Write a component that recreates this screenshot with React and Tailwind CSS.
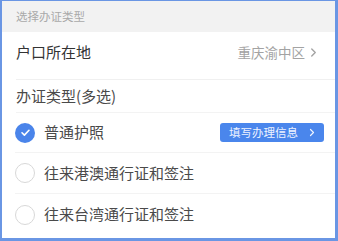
import React from "react";

const Chevron = ({ className }) => (
  <svg className={className} viewBox="0 0 8 12" fill="none" stroke="currentColor" strokeWidth="1.6" strokeLinecap="round" strokeLinejoin="round">
    <path d="M2 2l4 4-4 4" />
  </svg>
);

const Check = () => (
  <div className="w-[20px] h-[20px] rounded-full bg-[#4a84ea] flex items-center justify-center shrink-0">
    <svg width="11" height="11" viewBox="0 0 12 12" fill="none" stroke="white" strokeWidth="1.8" strokeLinecap="round" strokeLinejoin="round">
      <path d="M2.2 6.3l2.6 2.5 5-5.2" />
    </svg>
  </div>
);

const Empty = () => (
  <div className="w-[20px] h-[20px] rounded-full border border-[#d8d8d8] bg-white shrink-0" />
);

export default function App() {
  return (
    <div
      className="w-[338px] h-[241px] bg-white border-l-2 border-t border-r-[3px] border-b-[3px] border-[#6a96e4] overflow-hidden"
      style={{ fontFamily: '"Noto Sans CJK SC", "Noto Sans", sans-serif' }}
    >
      <div className="h-[31px] bg-[#f2f2f2] flex items-center pl-[14px] text-[11.5px] text-[#a9a9a9]">
        选择办证类型
      </div>
      <div className="h-[48px] flex items-center justify-between ml-[14px] pr-[18px] border-b border-[#f0f0f0]">
        <span className="text-[15px] text-[#333333] -mt-[6px]">户口所在地</span>
        <span className="flex items-center gap-[5px] text-[13.5px] text-[#a3a3a3] -mt-[6px]">
          重庆渝中区
          <Chevron className="w-[7px] h-[11px]" />
        </span>
      </div>
      <div className="h-[33px] flex items-center ml-[14px] border-b border-[#f3f3f3]">
        <span className="text-[15px] text-[#4a4a4a]">办证类型(多选)</span>
      </div>
      <div className="h-[40px] flex items-center justify-between ml-[13px] pr-[11px] border-b border-[#f3f3f3]">
        <div className="flex items-center gap-[9px]">
          <Check />
          <span className="text-[15px] text-[#4a4a4a]">普通护照</span>
        </div>
        <div className="h-[19px] w-[104px] rounded-[3px] bg-[#4a86ec] flex items-center justify-between pl-[9px] pr-[9px] text-[#eef3ff] text-[11.5px]">
          <span>填写办理信息</span>
          <Chevron className="w-[6px] h-[9px]" />
        </div>
      </div>
      <div className="h-[41px] flex items-center ml-[13px] border-b border-[#f3f3f3]">
        <div className="flex items-center gap-[9px]">
          <Empty />
          <span className="text-[15px] text-[#4a4a4a]">往来港澳通行证和签注</span>
        </div>
      </div>
      <div className="h-[41px] flex items-center ml-[13px]">
        <div className="flex items-center gap-[9px]">
          <Empty />
          <span className="text-[15px] text-[#4a4a4a]">往来台湾通行证和签注</span>
        </div>
      </div>
    </div>
  );
}
